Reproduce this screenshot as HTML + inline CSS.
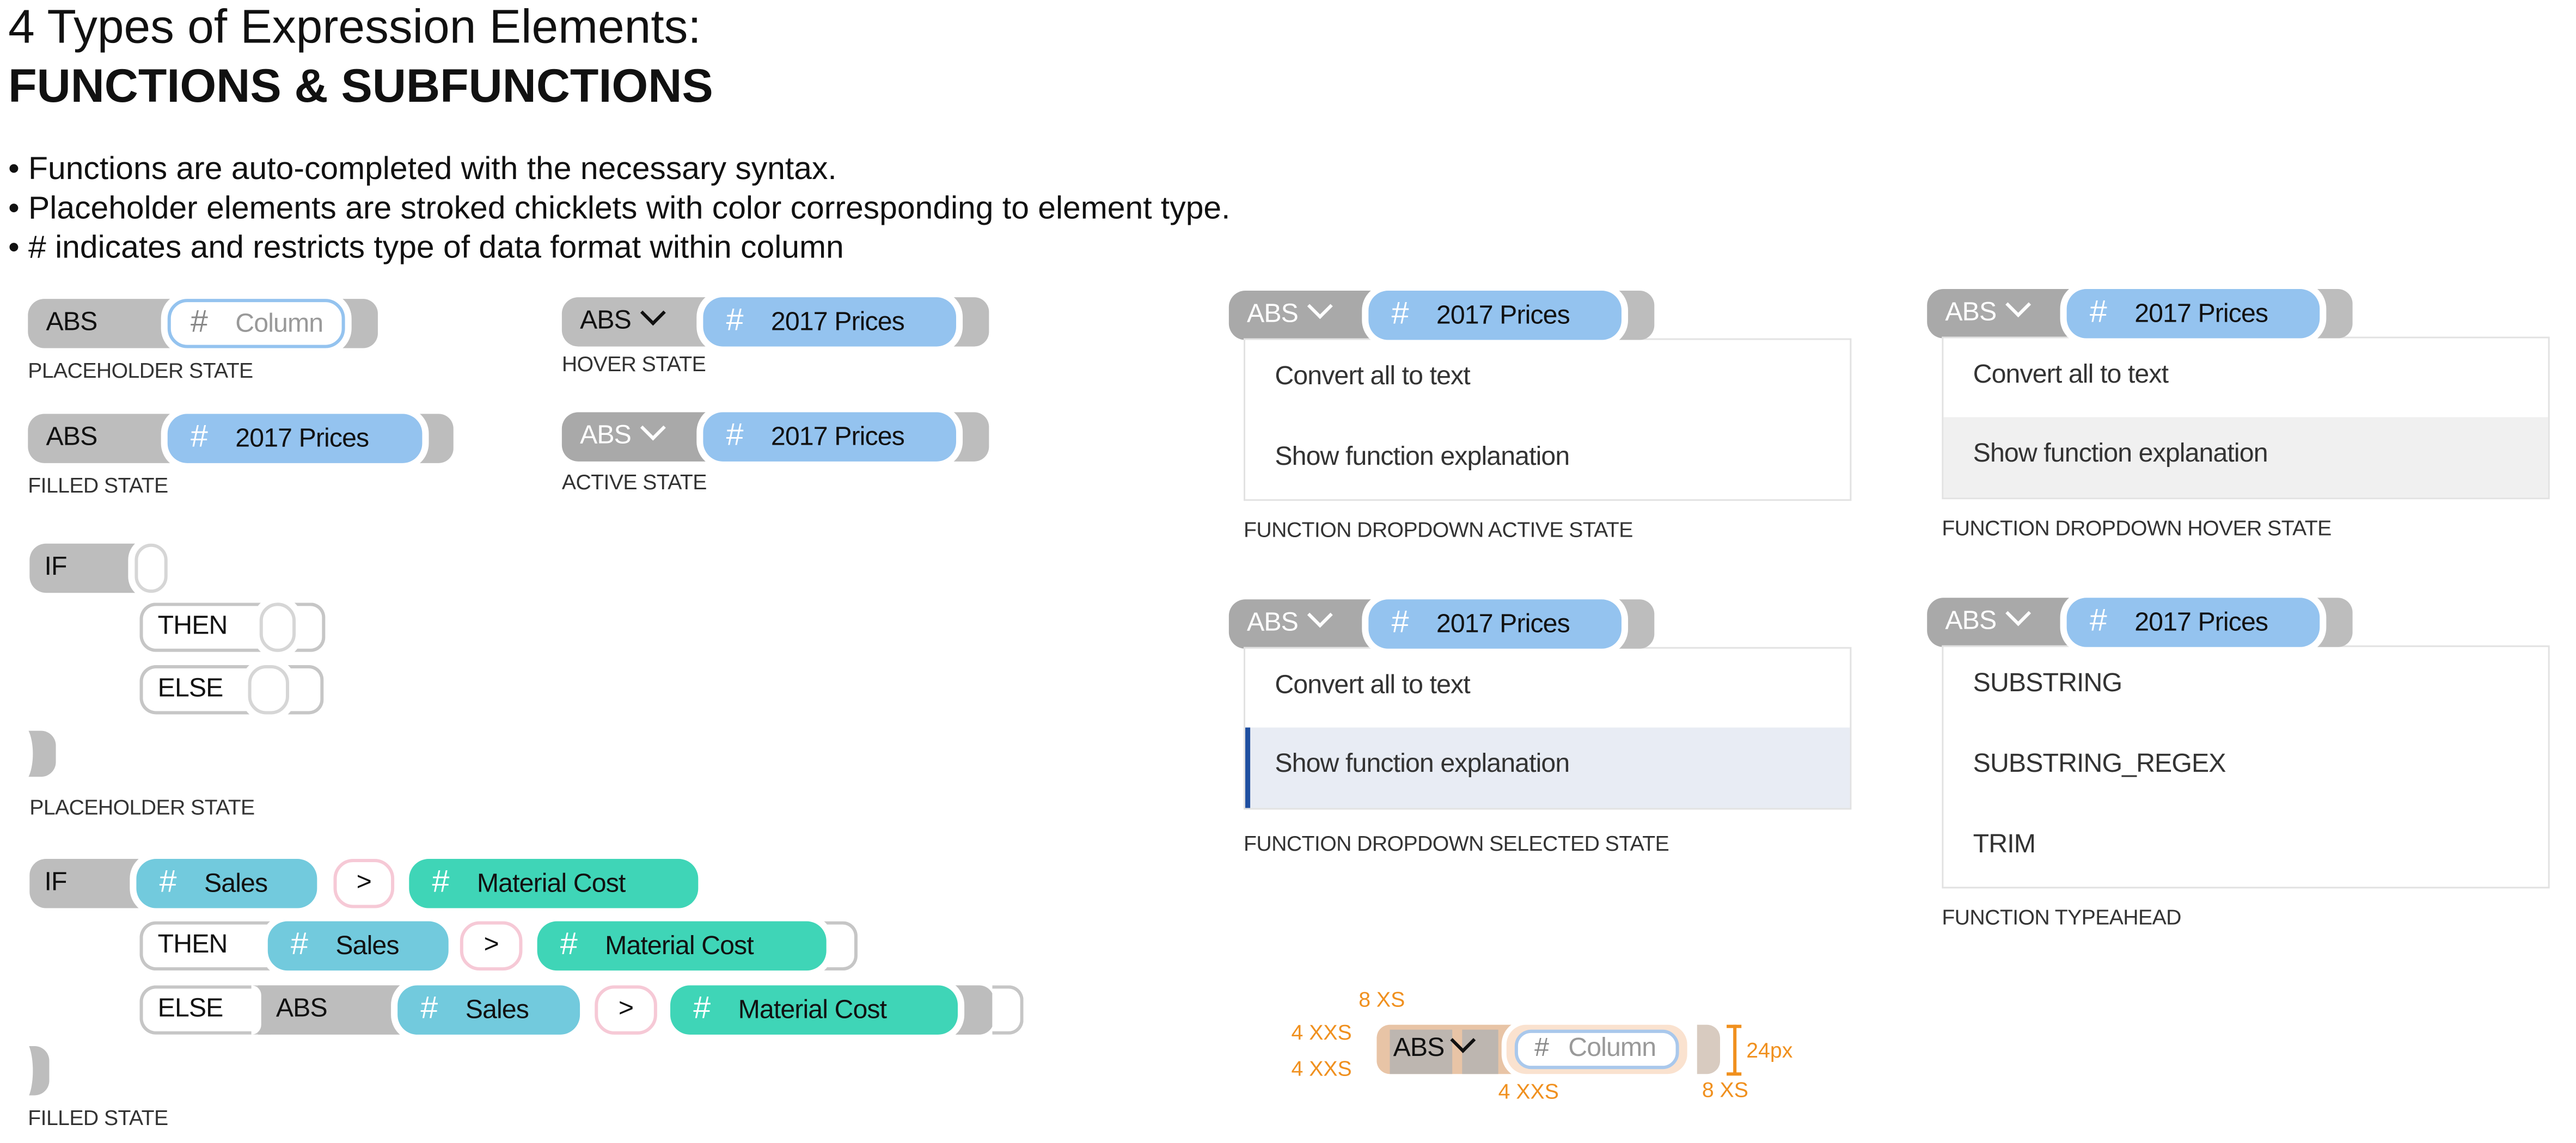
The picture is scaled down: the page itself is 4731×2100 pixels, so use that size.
<!DOCTYPE html>
<html><head><meta charset="utf-8"><style>
html,body{margin:0;padding:0;background:#fff;width:4731px;height:2100px;overflow:hidden}
#s{position:absolute;left:0;top:0;width:1568px;height:696px;transform:scale(3.0172);transform-origin:0 0;font-family:"Liberation Sans",Arial,sans-serif;color:#111}
.a{position:absolute;white-space:nowrap}
.g{position:absolute;background:#bdbdbd;height:30px;line-height:30px;border-radius:10px 0 0 10px;font-size:16px;padding-left:11px;box-sizing:border-box;color:#111;letter-spacing:-0.3px}
.gd{background:#a9a9a9;color:#fff}
.o{position:absolute;background:#fff;border:2px solid #c6c6c6;border-right:none;height:30px;line-height:26px;border-radius:10px 0 0 10px;font-size:16px;padding-left:9px;box-sizing:border-box;letter-spacing:-0.3px}
.p{position:absolute;height:30px;line-height:30px;border-radius:12px;font-size:16px;box-shadow:0 0 0 4px #fff;z-index:2;box-sizing:border-box;padding-left:14px;letter-spacing:-0.3px}
.p b{font-weight:normal;color:#fff;font-size:19px;margin-right:17px}
.blue{background:#94c3ef}.cy{background:#72cadd}.gr{background:#3fd5b7}
.ph{background:#fff;border:2px solid #94c3ef;line-height:26px;padding-left:12px;color:#999}
.ph b{color:#888}
.gt{background:#fff;border:2px solid #f6c9d6;text-align:center;padding-left:0;line-height:26px}
.ov{position:absolute;background:#fff;border:2px solid #d6d6d6;border-radius:11px;height:30px;box-sizing:border-box;box-shadow:0 0 0 4px #fff;z-index:2}
.br{position:absolute;background:#bdbdbd;height:30px;border-radius:0 9px 9px 0;z-index:1}
.bro{position:absolute;background:#fff;border:2px solid #c6c6c6;border-left:none;height:30px;box-sizing:border-box;border-radius:0 9px 9px 0;z-index:1}
.lb{position:absolute;font-size:13px;color:#333;white-space:nowrap;letter-spacing:-0.2px}
.dd{position:absolute;border:1px solid #e2e2e2;background:#fff;box-sizing:border-box}
.it{position:absolute;left:0;right:0;height:49px;line-height:46px;padding-left:18px;font-size:16px;color:#333;letter-spacing:-0.3px}
.or{position:absolute;color:#f0901e;font-size:13px;white-space:nowrap}
.chev{display:inline-block;width:9px;height:9px;border-right:2.2px solid currentColor;border-bottom:2.2px solid currentColor;transform:rotate(45deg);margin-left:8px;position:relative;top:-4px}
.cut{position:absolute;background:#fff;border-radius:0 50% 50% 0 / 0 50% 50% 0;z-index:3}
</style></head><body><div id="s">

<div class="a" style="left:5px;top:1px;font-size:29px">4 Types of Expression Elements:</div>
<div class="a" style="left:5px;top:37px;font-size:28.5px;font-weight:bold">FUNCTIONS &amp; SUBFUNCTIONS</div>
<div class="a" style="left:5px;top:91px;font-size:19.5px;line-height:24px">• Functions are auto-completed with the necessary syntax.<br>• Placeholder elements are stroked chicklets with color corresponding to element type.<br>• # indicates and restricts type of data format within column</div>

<!-- placeholder -->
<div class="g" style="left:17px;top:182px;width:90px">ABS</div>
<div class="p ph" style="left:102px;top:182px;width:108px"><b>#</b>Column</div>
<div class="br" style="left:205px;top:182px;width:25px"></div>
<div class="lb" style="left:17px;top:218px">PLACEHOLDER STATE</div>

<div class="g" style="left:17px;top:252px;width:90px">ABS</div>
<div class="p blue" style="left:102px;top:252px;width:155px"><b>#</b>2017 Prices</div>
<div class="br" style="left:252px;top:252px;width:24px"></div>
<div class="lb" style="left:17px;top:288px">FILLED STATE</div>

<!-- hover / active -->
<div class="g" style="left:342px;top:181px;width:92px">ABS<span class="chev"></span></div>
<div class="p blue" style="left:428px;top:181px;width:154px"><b>#</b>2017 Prices</div>
<div class="br" style="left:577px;top:181px;width:25px"></div>
<div class="lb" style="left:342px;top:214px">HOVER STATE</div>

<div class="g gd" style="left:342px;top:251px;width:92px">ABS<span class="chev"></span></div>
<div class="p blue" style="left:428px;top:251px;width:154px"><b>#</b>2017 Prices</div>
<div class="br" style="left:577px;top:251px;width:25px"></div>
<div class="lb" style="left:342px;top:286px">ACTIVE STATE</div>

<!-- IF placeholder -->
<div class="g" style="left:18px;top:331px;width:70px;padding-left:9px">IF</div>
<div class="ov" style="left:82px;top:331px;width:20px"></div>
<div class="o" style="left:85px;top:367px;width:80px">THEN</div>
<div class="ov" style="left:158px;top:367px;width:22px"></div>
<div class="bro" style="left:176px;top:367px;width:22px"></div>
<div class="o" style="left:85px;top:405px;width:75px">ELSE</div>
<div class="ov" style="left:151px;top:405px;width:25px"></div>
<div class="bro" style="left:172px;top:405px;width:25px"></div>
<div class="br" style="left:12px;top:445px;width:22px;height:28px"></div>
<div class="cut" style="left:6px;top:441px;width:14px;height:36px"></div>
<div class="lb" style="left:18px;top:484px">PLACEHOLDER STATE</div>

<!-- IF filled -->
<div class="g" style="left:18px;top:523px;width:72px;padding-left:9px">IF</div>
<div class="p cy" style="left:83px;top:523px;width:110px"><b>#</b>Sales</div>
<div class="p gt" style="left:203px;top:523px;width:37px">&gt;</div>
<div class="p gr" style="left:249px;top:523px;width:176px"><b>#</b>Material Cost</div>

<div class="o" style="left:85px;top:561px;width:85px">THEN</div>
<div class="p cy" style="left:163px;top:561px;width:110px"><b>#</b>Sales</div>
<div class="p gt" style="left:280px;top:561px;width:38px">&gt;</div>
<div class="p gr" style="left:327px;top:561px;width:176px"><b>#</b>Material Cost</div>
<div class="bro" style="left:500px;top:561px;width:22px"></div>

<div class="o" style="left:85px;top:600px;width:80px">ELSE</div>
<div class="g" style="left:157px;top:600px;width:95px;border-radius:0">ABS</div>
<div class="p" style="left:153px;top:600px;width:6px;height:30px;padding:0;border-radius:0 12px 12px 0;background:#fff;box-shadow:none;z-index:1"></div>
<div class="p cy" style="left:242px;top:600px;width:111px"><b>#</b>Sales</div>
<div class="p gt" style="left:362px;top:600px;width:38px">&gt;</div>
<div class="p gr" style="left:408px;top:600px;width:175px"><b>#</b>Material Cost</div>
<div class="br" style="left:578px;top:600px;width:27px"></div>
<div class="bro" style="left:604px;top:600px;width:19px"></div>
<div class="br" style="left:12px;top:637px;width:18px;height:30px"></div>
<div class="cut" style="left:8px;top:633px;width:12px;height:38px"></div>
<div class="lb" style="left:17px;top:673px">FILLED STATE</div>

<!-- panel 1 -->
<div class="g gd" style="left:748px;top:177px;width:92px">ABS<span class="chev"></span></div>
<div class="p blue" style="left:833px;top:177px;width:154px"><b>#</b>2017 Prices</div>
<div class="br" style="left:982px;top:177px;width:25px"></div>
<div class="dd" style="left:757px;top:206px;width:370px;height:99px">
<div class="it" style="top:0">Convert all to text</div>
<div class="it" style="top:49px">Show function explanation</div></div>
<div class="lb" style="left:757px;top:315px">FUNCTION DROPDOWN ACTIVE STATE</div>

<!-- panel 2 -->
<div class="g gd" style="left:1173px;top:176px;width:92px">ABS<span class="chev"></span></div>
<div class="p blue" style="left:1258px;top:176px;width:154px"><b>#</b>2017 Prices</div>
<div class="br" style="left:1407px;top:176px;width:25px"></div>
<div class="dd" style="left:1182px;top:205px;width:370px;height:99px">
<div class="it" style="top:0">Convert all to text</div>
<div class="it" style="top:48px;background:#f0f0f0">Show function explanation</div></div>
<div class="lb" style="left:1182px;top:314px">FUNCTION DROPDOWN HOVER STATE</div>

<!-- panel 3 -->
<div class="g gd" style="left:748px;top:365px;width:92px">ABS<span class="chev"></span></div>
<div class="p blue" style="left:833px;top:365px;width:154px"><b>#</b>2017 Prices</div>
<div class="br" style="left:982px;top:365px;width:25px"></div>
<div class="dd" style="left:757px;top:394px;width:370px;height:99px">
<div class="it" style="top:0">Convert all to text</div>
<div class="it" style="top:48px;background:#e8ecf4;border-left:3px solid #1f4fa0;padding-left:15px">Show function explanation</div></div>
<div class="lb" style="left:757px;top:506px">FUNCTION DROPDOWN SELECTED STATE</div>

<!-- panel 4 -->
<div class="g gd" style="left:1173px;top:364px;width:92px">ABS<span class="chev"></span></div>
<div class="p blue" style="left:1258px;top:364px;width:154px"><b>#</b>2017 Prices</div>
<div class="br" style="left:1407px;top:364px;width:25px"></div>
<div class="dd" style="left:1182px;top:393px;width:370px;height:148px">
<div class="it" style="top:0">SUBSTRING</div>
<div class="it" style="top:49px">SUBSTRING_REGEX</div>
<div class="it" style="top:98px">TRIM</div></div>
<div class="lb" style="left:1182px;top:551px">FUNCTION TYPEAHEAD</div>

<!-- spec -->
<div class="or" style="left:827px;top:601px">8 XS</div>
<div class="or" style="left:786px;top:621px">4 XXS</div>
<div class="or" style="left:786px;top:643px">4 XXS</div>
<div style="position:absolute;left:838px;top:624px;width:83px;height:30px;background:#e8c4a6;border-radius:8px 0 0 8px"></div>
<div style="position:absolute;left:846px;top:627px;width:38px;height:27px;background:#bdb6b0"></div>
<div style="position:absolute;left:890px;top:627px;width:22px;height:27px;background:#bdb6b0"></div>
<div class="a" style="left:848px;top:628px;font-size:16px;line-height:22px;letter-spacing:-0.3px">ABS<span class="chev" style="margin-left:6px"></span></div>
<div style="position:absolute;left:917px;top:624px;width:110px;height:30px;background:#fae2cf;border-radius:12px;box-shadow:0 0 0 3px #fff"></div>
<div style="position:absolute;left:922px;top:627px;width:100px;height:24px;box-sizing:border-box;background:#fff;border:2px solid #a9c8ec;border-radius:10px;font-size:16px;line-height:20px;color:#999;padding-left:10px;letter-spacing:-0.3px"><span style="color:#888;margin-right:12px">#</span>Column</div>
<div style="position:absolute;left:1033px;top:624px;width:14px;height:30px;background:#d8cbc0;border-radius:0 8px 8px 0"></div>
<div style="position:absolute;left:1055px;top:624px;width:1.5px;height:30px;background:#f0901e"></div>
<div style="position:absolute;left:1051px;top:624px;width:9px;height:1.5px;background:#f0901e"></div>
<div style="position:absolute;left:1051px;top:653px;width:9px;height:1.5px;background:#f0901e"></div>
<div class="or" style="left:1063px;top:632px">24px</div>
<div class="or" style="left:912px;top:657px">4 XXS</div>
<div class="or" style="left:1036px;top:656px">8 XS</div>

</div></body></html>
